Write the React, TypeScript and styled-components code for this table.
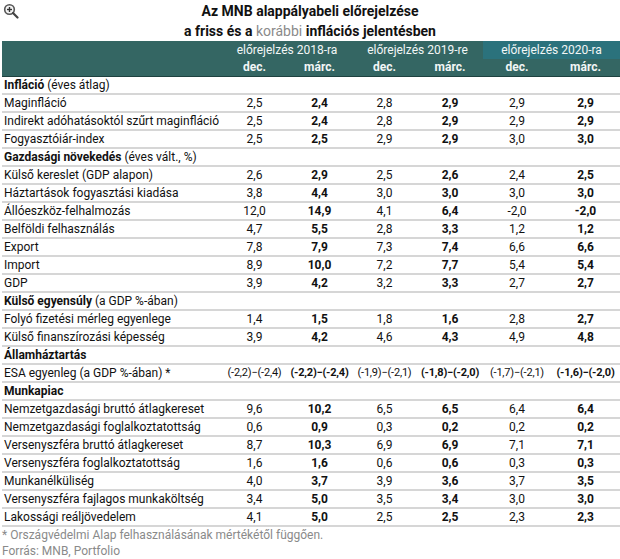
import React from "react";
import styled, { createGlobalStyle } from "styled-components";

const Global = createGlobalStyle`
  html, body { margin: 0; padding: 0; background: #fff; }
  body { font-family: Roboto, "Liberation Sans", Arial, sans-serif; color: #111; }
`;

const Page = styled.div`
  width: 620px;
  height: 559px;
  overflow: hidden;
  position: relative;
  background: #fff;
`;

const ZoomIcon = styled.svg`
  position: absolute;
  left: 3px;
  top: 3px;
`;

const TitleBlock = styled.div`
  text-align: center;
  font-weight: 700;
  font-size: 14px;
  line-height: 20px;
  padding-top: 1px;
  height: 41px;
  box-sizing: border-box;
`;

const Muted = styled.span`
  color: #8a8a8a;
  font-weight: 400;
`;

const Table = styled.div`
  margin-left: 2px;
  width: 618px;
  display: grid;
  grid-template-columns: 220px 65px 65px 65px 66px 68px 69px;
  font-size: 12px;
`;

const HeadCell = styled.div<{ $span?: number; $light?: boolean; $bold?: boolean }>`
  grid-column: span ${(p) => p.$span ?? 1};
  background: ${(p) => (p.$light ? "#2b727c" : "#346663")};
  color: #f2f6f6;
  height: 18px;
  line-height: 18px;
  text-align: center;
  font-weight: ${(p) => (p.$bold ? 700 : 400)};
`;

const SubHeadCell = styled(HeadCell)`
  border-bottom: 1px solid #1e4240;
  height: 18px;
  line-height: 17px;
  box-sizing: border-box;
`;

const Label = styled.div`
  height: 18px;
  line-height: 16px;
  border-bottom: 2px solid #d6d6d6;
  padding-left: 2px;
  box-sizing: border-box;
  white-space: nowrap;
`;

const Section = styled(Label)`
  grid-column: span 7;
`;

const Strong = styled.span`
  font-weight: 700;
`;

const Value = styled.div<{ $bold?: boolean; $small?: boolean }>`
  height: 18px;
  line-height: 16px;
  border-bottom: 2px solid #d6d6d6;
  box-sizing: border-box;
  text-align: center;
  white-space: nowrap;
  font-weight: ${(p) => (p.$bold ? 700 : 400)};
  font-size: ${(p) => (p.$small ? "11px" : "12px")};
  letter-spacing: ${(p) => (p.$small ? "-0.2px" : "0")};
`;

const Footer = styled.div`
  color: #8a8a8a;
  font-size: 12px;
  line-height: 16px;
  padding-left: 2px;
`;

type Row =
  | { kind: "section"; bold: string; rest?: string }
  | { kind: "data"; label: string; values: string[]; small?: boolean };

const rows: Row[] = [
  { kind: "section", bold: "Infláció", rest: " (éves átlag)" },
  { kind: "data", label: "Maginfláció", values: ["2,5", "2,4", "2,8", "2,9", "2,9", "2,9"] },
  { kind: "data", label: "Indirekt adóhatásoktól szűrt maginfláció", values: ["2,5", "2,4", "2,8", "2,9", "2,9", "2,9"] },
  { kind: "data", label: "Fogyasztóiár-index", values: ["2,5", "2,5", "2,9", "2,9", "3,0", "3,0"] },
  { kind: "section", bold: "Gazdasági növekedés", rest: " (éves vált., %)" },
  { kind: "data", label: "Külső kereslet (GDP alapon)", values: ["2,6", "2,9", "2,5", "2,6", "2,4", "2,5"] },
  { kind: "data", label: "Háztartások fogyasztási kiadása", values: ["3,8", "4,4", "3,0", "3,0", "3,0", "3,0"] },
  { kind: "data", label: "Állóeszköz-felhalmozás", values: ["12,0", "14,9", "4,1", "6,4", "-2,0", "-2,0"] },
  { kind: "data", label: "Belföldi felhasználás", values: ["4,7", "5,5", "2,8", "3,3", "1,2", "1,2"] },
  { kind: "data", label: "Export", values: ["7,8", "7,9", "7,3", "7,4", "6,6", "6,6"] },
  { kind: "data", label: "Import", values: ["8,9", "10,0", "7,2", "7,7", "5,4", "5,4"] },
  { kind: "data", label: "GDP", values: ["3,9", "4,2", "3,2", "3,3", "2,7", "2,7"] },
  { kind: "section", bold: "Külső egyensúly", rest: " (a GDP %-ában)" },
  { kind: "data", label: "Folyó fizetési mérleg egyenlege", values: ["1,4", "1,5", "1,8", "1,6", "2,8", "2,7"] },
  { kind: "data", label: "Külső finanszírozási képesség", values: ["3,9", "4,2", "4,6", "4,3", "4,9", "4,8"] },
  { kind: "section", bold: "Államháztartás" },
  {
    kind: "data",
    label: "ESA egyenleg (a GDP %-ában) *",
    small: true,
    values: ["(-2,2)−(-2,4)", "(-2,2)−(-2,4)", "(-1,9)−(-2,1)", "(-1,8)−(-2,0)", "(-1,7)−(-2,1)", "(-1,6)−(-2,0)"],
  },
  { kind: "section", bold: "Munkapiac" },
  { kind: "data", label: "Nemzetgazdasági bruttó átlagkereset", values: ["9,6", "10,2", "6,5", "6,5", "6,4", "6,4"] },
  { kind: "data", label: "Nemzetgazdasági foglalkoztatottság", values: ["0,6", "0,9", "0,3", "0,2", "0,2", "0,2"] },
  { kind: "data", label: "Versenyszféra bruttó átlagkereset", values: ["8,7", "10,3", "6,9", "6,9", "7,1", "7,1"] },
  { kind: "data", label: "Versenyszféra foglalkoztatottság", values: ["1,6", "1,6", "0,6", "0,6", "0,3", "0,3"] },
  { kind: "data", label: "Munkanélküliség", values: ["4,0", "3,7", "3,9", "3,6", "3,7", "3,5"] },
  { kind: "data", label: "Versenyszféra fajlagos munkaköltség", values: ["3,4", "5,0", "3,5", "3,4", "3,0", "3,0"] },
  { kind: "data", label: "Lakossági reáljövedelem", values: ["4,1", "5,0", "2,5", "2,5", "2,3", "2,3"] },
];

export default function App() {
  return (
    <Page>
      <Global />
      <ZoomIcon width="16" height="16" viewBox="0 0 16 16">
        <circle cx="6.5" cy="6.5" r="4.8" fill="#f4f4f4" stroke="#555" strokeWidth="1.6" />
        <line x1="10" y1="10" x2="14.5" y2="14.5" stroke="#444" strokeWidth="2.2" strokeLinecap="round" />
        <line x1="4" y1="6.5" x2="9" y2="6.5" stroke="#333" strokeWidth="1.4" />
        <line x1="6.5" y1="4" x2="6.5" y2="9" stroke="#333" strokeWidth="1.4" />
      </ZoomIcon>
      <TitleBlock>
        <div>Az MNB alappályabeli előrejelzése</div>
        <div>
          a friss és a <Muted>korábbi</Muted> inflációs jelentésben
        </div>
      </TitleBlock>
      <Table>
        <HeadCell />
        <HeadCell $span={2}>előrejelzés 2018-ra</HeadCell>
        <HeadCell $span={2}>előrejelzés 2019-re</HeadCell>
        <HeadCell $span={2} $light>
          előrejelzés 2020-ra
        </HeadCell>
        <SubHeadCell />
        {["dec.", "márc.", "dec.", "márc.", "dec.", "márc."].map((h, i) => (
          <SubHeadCell key={i} $bold>
            {h}
          </SubHeadCell>
        ))}
        {rows.map((r, i) =>
          r.kind === "section" ? (
            <Section key={i}>
              <Strong>{r.bold}</Strong>
              {r.rest}
            </Section>
          ) : (
            <React.Fragment key={i}>
              <Label>{r.label}</Label>
              {r.values.map((v, j) => (
                <Value key={j} $bold={j % 2 === 1} $small={r.small}>
                  {v}
                </Value>
              ))}
            </React.Fragment>
          )
        )}
      </Table>
      <Footer>* Országvédelmi Alap felhasználásának mértékétől függően.</Footer>
      <Footer>Forrás: MNB, Portfolio</Footer>
    </Page>
  );
}
